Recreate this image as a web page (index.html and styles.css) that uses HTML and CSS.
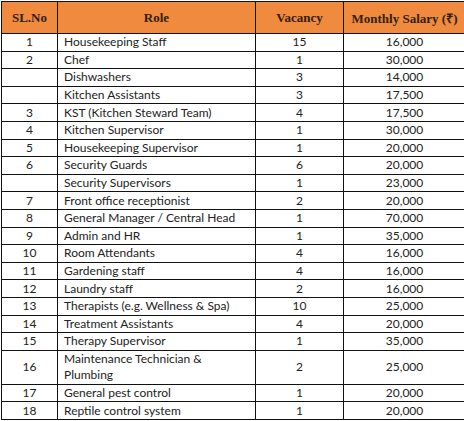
FILE: index.html
```html
<!DOCTYPE html>
<html>
<head>
<meta charset="utf-8">
<link rel="stylesheet" href="styles.css">
</head>
<body>
<table class="jobs">
  <colgroup>
    <col class="c-no"><col class="c-role"><col class="c-vac"><col class="c-sal">
  </colgroup>
  <thead>
    <tr><th>SL.No</th><th>Role</th><th>Vacancy</th><th>Monthly Salary (₹)</th></tr>
  </thead>
  <tbody>
    <tr><td class="ctr">1</td><td class="role">Housekeeping Staff</td><td class="ctr">15</td><td class="ctr">16,000</td></tr>
    <tr><td class="ctr">2</td><td class="role">Chef</td><td class="ctr">1</td><td class="ctr">30,000</td></tr>
    <tr><td class="ctr"></td><td class="role">Dishwashers</td><td class="ctr">3</td><td class="ctr">14,000</td></tr>
    <tr><td class="ctr"></td><td class="role">Kitchen Assistants</td><td class="ctr">3</td><td class="ctr">17,500</td></tr>
    <tr><td class="ctr">3</td><td class="role">KST (Kitchen Steward Team)</td><td class="ctr">4</td><td class="ctr">17,500</td></tr>
    <tr><td class="ctr">4</td><td class="role">Kitchen Supervisor</td><td class="ctr">1</td><td class="ctr">30,000</td></tr>
    <tr><td class="ctr">5</td><td class="role">Housekeeping Supervisor</td><td class="ctr">1</td><td class="ctr">20,000</td></tr>
    <tr><td class="ctr">6</td><td class="role">Security Guards</td><td class="ctr">6</td><td class="ctr">20,000</td></tr>
    <tr><td class="ctr"></td><td class="role">Security Supervisors</td><td class="ctr">1</td><td class="ctr">23,000</td></tr>
    <tr><td class="ctr">7</td><td class="role">Front office receptionist</td><td class="ctr">2</td><td class="ctr">20,000</td></tr>
    <tr><td class="ctr">8</td><td class="role">General Manager / Central Head</td><td class="ctr">1</td><td class="ctr">70,000</td></tr>
    <tr><td class="ctr">9</td><td class="role">Admin and HR</td><td class="ctr">1</td><td class="ctr">35,000</td></tr>
    <tr><td class="ctr">10</td><td class="role">Room Attendants</td><td class="ctr">4</td><td class="ctr">16,000</td></tr>
    <tr><td class="ctr">11</td><td class="role">Gardening staff</td><td class="ctr">4</td><td class="ctr">16,000</td></tr>
    <tr><td class="ctr">12</td><td class="role">Laundry staff</td><td class="ctr">2</td><td class="ctr">16,000</td></tr>
    <tr><td class="ctr">13</td><td class="role">Therapists (e.g. Wellness &amp; Spa)</td><td class="ctr">10</td><td class="ctr">25,000</td></tr>
    <tr><td class="ctr">14</td><td class="role">Treatment Assistants</td><td class="ctr">4</td><td class="ctr">20,000</td></tr>
    <tr><td class="ctr">15</td><td class="role">Therapy Supervisor</td><td class="ctr">1</td><td class="ctr">35,000</td></tr>
    <tr class="tall"><td class="ctr">16</td><td class="role">Maintenance Technician &amp;<br>Plumbing</td><td class="ctr">2</td><td class="ctr">25,000</td></tr>
    <tr><td class="ctr">17</td><td class="role">General pest control</td><td class="ctr">1</td><td class="ctr">20,000</td></tr>
    <tr><td class="ctr">18</td><td class="role">Reptile control system</td><td class="ctr">1</td><td class="ctr">20,000</td></tr>
  </tbody>
</table>
</body>
</html>
```
FILE: styles.css
```css
html, body {
  margin: 0;
  padding: 0;
  background: #ffffff;
  overflow: hidden;
}
body {
  padding: 1px 0 0 1px;
}
.jobs {
  border-collapse: collapse;
  table-layout: fixed;
  width: 464px;
  font-family: Lato, "Open Sans", sans-serif;
  font-size: 12px;
  color: #222;
}
.c-no { width: 56px; }
.c-role { width: 198px; }
.c-vac { width: 88px; }
.c-sal { width: 122px; }
.jobs th, .jobs td {
  border: 1px solid #111;
  padding: 0;
}
.jobs th {
  background: #ef8a3f;
  height: 31px;
  font-family: "Liberation Serif", "Times New Roman", serif;
  font-weight: bold;
  font-size: 13px;
  color: #33200f;
  text-align: center;
}
.jobs td {
  height: 16.6px;
  line-height: 16px;
}
.jobs tr.tall td {
  height: 33.2px;
}
.ctr { text-align: center; }
.role { padding-left: 6px !important; }
```
